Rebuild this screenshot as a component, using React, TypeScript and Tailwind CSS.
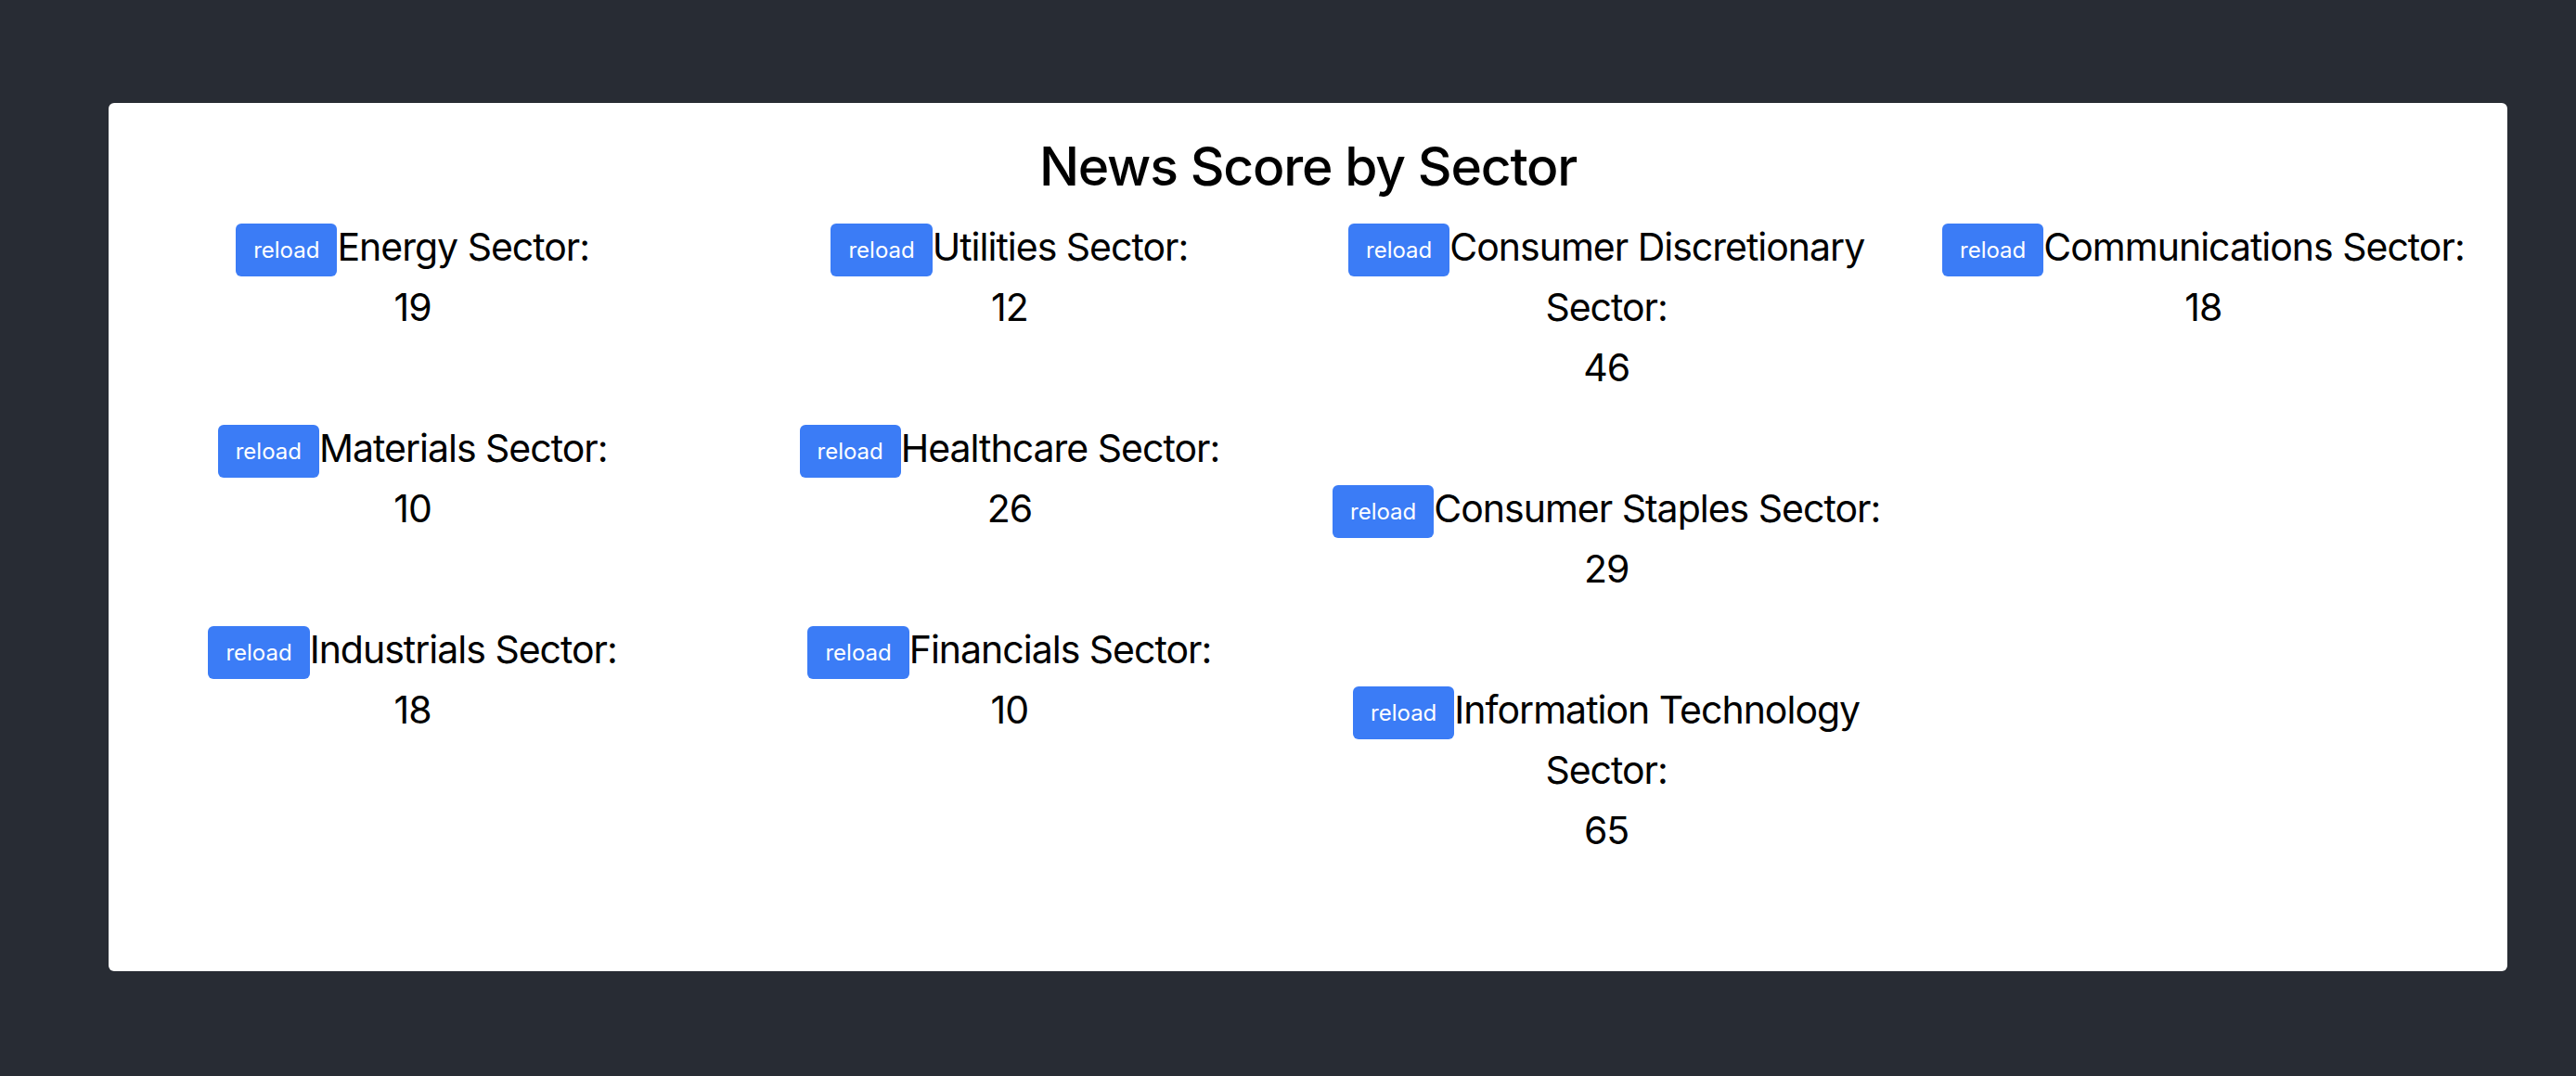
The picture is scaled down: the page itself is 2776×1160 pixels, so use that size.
const sectors: { name: string; score: number }[][] = [
  [
    { name: "Energy Sector:", score: 19 },
    { name: "Materials Sector:", score: 10 },
    { name: "Industrials Sector:", score: 18 },
  ],
  [
    { name: "Utilities Sector:", score: 12 },
    { name: "Healthcare Sector:", score: 26 },
    { name: "Financials Sector:", score: 10 },
  ],
  [
    { name: "Consumer Discretionary Sector:", score: 46 },
    { name: "Consumer Staples Sector:", score: 29 },
    { name: "Information Technology Sector:", score: 65 },
  ],
  [{ name: "Communications Sector:", score: 18 }],
];

function SectorScore({ name, score }: { name: string; score: number }) {
  return (
    <div className="text-center text-[41px] leading-[65px] tracking-[-1px] text-black">
      <button className="bg-[#3b7cf6] text-white text-[24px] leading-[37px] tracking-normal px-[19px] py-[10px] rounded-[6px] align-middle">
        reload
      </button>
      {name}
      <div>{score}</div>
    </div>
  );
}

export default function App() {
  return (
    <div
      className="min-h-screen bg-[#282c34] pt-[111px] pl-[117px] pr-[74px]"
      style={{ fontFamily: "Inter, 'Noto Sans', sans-serif" }}
    >
      <div className="bg-white rounded-[6px] pt-[26px] pb-[119px] px-[6px]">
        <h1 className="text-center text-[57px] leading-[86px] font-medium tracking-[-1.2px] text-black">
          News Score by Sector
        </h1>
        <div className="grid grid-cols-4 mt-[11px]">
          {sectors.map((col, i) => (
            <div key={i} className="flex flex-col gap-[87px]">
              {col.map((s) => (
                <SectorScore key={s.name} name={s.name} score={s.score} />
              ))}
            </div>
          ))}
        </div>
      </div>
    </div>
  );
}
